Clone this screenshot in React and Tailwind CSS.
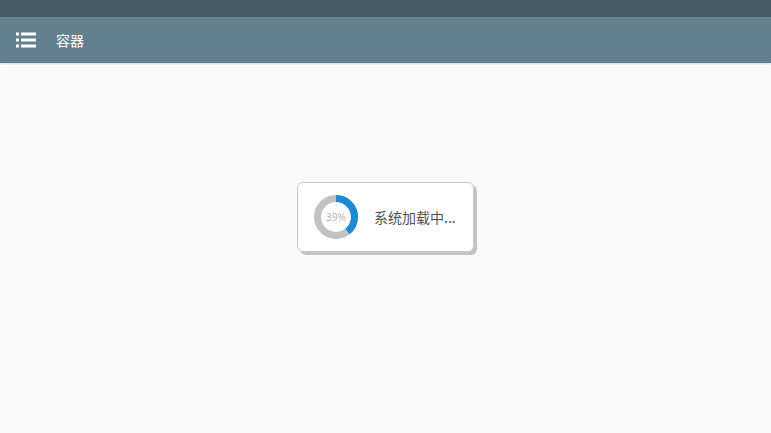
import React from 'react';

const Ring = ({ percent }) => {
  const r = 18.5;
  const c = 2 * Math.PI * r;
  return (
    <div className="relative w-[44px] h-[44px]">
      <svg width="44" height="44" viewBox="0 0 44 44">
        <circle cx="22" cy="22" r={r} fill="none" stroke="#c2c2c2" strokeWidth="7" />
        <circle
          cx="22"
          cy="22"
          r={r}
          fill="none"
          stroke="#1b8ad3"
          strokeWidth="7"
          strokeDasharray={`${(c * percent) / 100} ${c}`}
          transform="rotate(-90 22 22)"
        />
      </svg>
      <span className="absolute inset-0 flex items-center justify-center text-[10px] text-[#b5b5b5]">{percent}%</span>
    </div>
  );
};

const App = () => {
  return (
    <div className="w-[771px] h-[433px] flex flex-col bg-[#fafafa] overflow-hidden" style={{ fontFamily: '"Noto Sans", "Noto Sans CJK SC", sans-serif' }}>
      <div className="h-[17px] bg-[#475a66]"></div>
      <div className="h-[46px] bg-[#62808e] flex items-center pl-[16px] shadow-[0_1px_2px_rgba(0,0,0,0.15)]">
        <svg width="20" height="16" viewBox="0 0 20 16" className="mr-[20px]">
          <rect x="0" y="0.5" width="3" height="3" fill="#fff" />
          <rect x="0" y="6.5" width="3" height="3" fill="#fff" />
          <rect x="0" y="12.5" width="3" height="3" fill="#fff" />
          <rect x="5" y="0.5" width="15" height="3" fill="#fff" />
          <rect x="5" y="6.5" width="15" height="3" fill="#fff" />
          <rect x="5" y="12.5" width="15" height="3" fill="#fff" />
        </svg>
        <span className="text-white text-[14px]" style={{ fontFamily: '"Noto Sans CJK SC", sans-serif' }}>容器</span>
      </div>
      <div className="flex-1 flex justify-center pt-[119px]">
        <div className="w-[177px] h-[70px] bg-white border border-[#c8c8c8] rounded-[6px] shadow-[3px_3px_0_#c4c4c4] flex items-center pl-[16px]">
          <Ring percent={39} />
          <span className="ml-[16px] text-[14px] text-[#505050]" style={{ fontFamily: '"Noto Sans CJK SC", sans-serif' }}>系统加载中...</span>
        </div>
      </div>
    </div>
  );
};

export default App;
